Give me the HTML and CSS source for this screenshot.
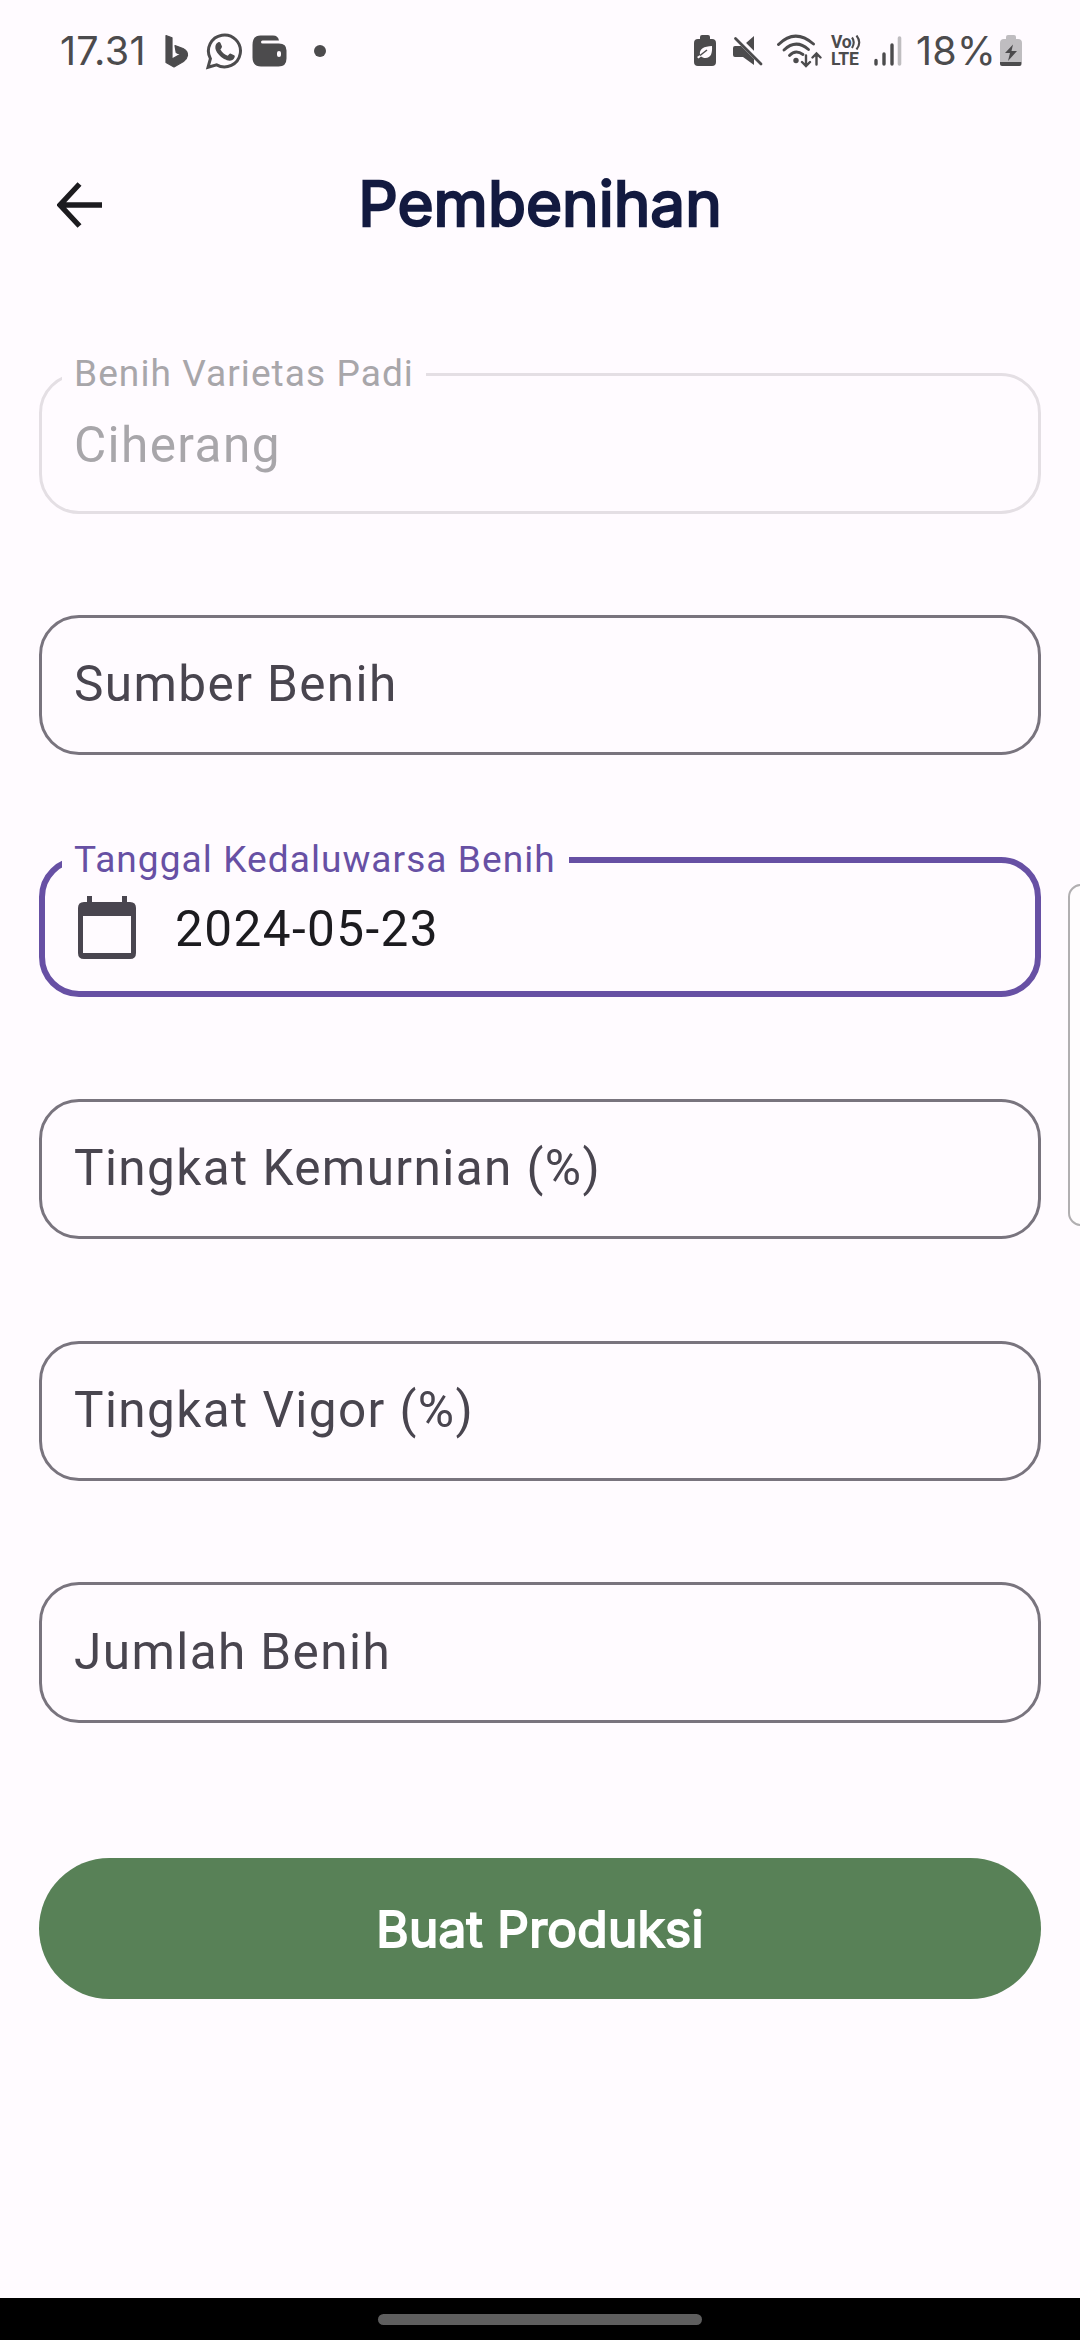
FILE: index.html
```html
<!DOCTYPE html>
<html lang="id">
<head>
<meta charset="utf-8">
<title>Pembenihan</title>
<link rel="stylesheet" href="styles.css">
</head>
<body>
<div class="status">
  <div class="status-group">
    <span class="clock">17.31</span>
    <svg class="ic-bing" width="24" height="34" viewBox="0 0 24 34"><path d="M1 1.5 7 3.8V25l8-4.6-3.8-1.9L10 11.600 18 14.500Q23 17 22.500 21.500 22 25 18.500 27.500L9 33 1 28.5Z" fill="#4c4b4d" stroke="#4c4b4d" stroke-width="1.2" stroke-linejoin="round"/></svg>
    <svg class="ic-wa" width="38" height="38" viewBox="0 0 38 38"><path d="M3 35.3 5.4 26.6A16 16 0 1 1 11.600 32.9Z" fill="none" stroke="#4c4b4d" stroke-width="3"/><path d="M13.200 10.200c.8-.5 1.800-.4 2.200.5l1.500 3.500c.3 1-.2 1.600-1.500 3.200 2 3.500 4.300 5.200 7.300 6.300 1.300-1.400 1.800-2.500 2.700-2.300l3.700 1.800c1 .5.8 1 .4 2.300-.8 2.200-3 3.200-5 3.200-2.800 0-8-2.500-10.800-6.100-2.500-3.200-3.800-5.600-3.300-8.400.3-1.900 1.300-3.100 2.800-4Z" fill="#4c4b4d"/></svg>
    <svg class="ic-wallet" width="36" height="32" viewBox="0 0 36 32"><path d="M8.500.5H21q5 0 6 5H10.500a1.300 1.300 0 0 0 0 3H27q7.500 0 7.500 7v8q0 8-8 8H9q-8.500 0-8.500-9V10q0-9.500 8-9.500Z" fill="#4c4b4d"/><rect x="25" y="16" width="4" height="6" rx="2" fill="#fffbff"/></svg>
    <i class="dot"></i>
  </div>
  <div class="status-group">
    <svg width="22" height="32" viewBox="0 0 22 32"><path d="M6 4V2q0-2 2-2h6q2 0 2 2v2h2q4 0 4 4v19q0 4-4 4H4q-4 0-4-4V8q0-4 4-4Z" fill="#4c4b4d"/><path d="M18 11c.5 7-1 12-6.500 12-2 0-3.300-.7-4.500-1.500L4.500 23.500 3 22l3-2C5 13.500 10 11.500 18 11Z" fill="#fffbff"/><path d="M6 20.500 13 15" stroke="#4c4b4d" stroke-width="1.500"/></svg>
    <svg class="ic-mute" width="30" height="30" viewBox="0 0 30 30"><path d="M13 7 21 0V15ZM0 12q0-2 2-2h6l13 13v6L10 21H2q-2 0-2-2Z" fill="#4c4b4d"/><path d="M4.500 .5 30 26" stroke="#fffbff" stroke-width="2.500"/><path d="M2.500 2.500 28 28" stroke="#4c4b4d" stroke-width="2.800" stroke-linecap="round"/></svg>
    <svg class="ic-wifi" width="45" height="34" viewBox="0 0 45 34"><g fill="none" stroke="#4c4b4d" stroke-width="2.900" stroke-linecap="round"><path d="M1.500 10.500Q18-6 36.500 10"/><path d="M7 16Q19 4.500 31.500 15.500"/><path d="M12.500 21.500Q18.500 15 26 20.500"/><path d="M29 21.500V31M25 28l4 4 4-4M39.500 30.500V20M35.500 23.500l4-4 4 4" stroke-width="2.400"/></g><circle cx="19" cy="26.500" r="2.700" fill="#4c4b4d"/></svg>
    <span class="volte"><span class="vo">Vo<svg width="10" height="15" viewBox="0 0 10 15"><path d="M1 2.500Q4.500 7 1 13M5.500.500Q11 7.500 5.500 14.500" fill="none" stroke="#4c4b4d" stroke-width="2.100"/></svg></span><span class="lte">LTE</span></span>
    <svg class="ic-signal" width="28" height="30" viewBox="0 0 28 30"><path d="M2 24.500V28M10 18V28M18 9V28" stroke="#4c4b4d" stroke-width="3.400" stroke-linecap="round"/><path d="M25.500 2V28" stroke="#bfbdc0" stroke-width="3.600" stroke-linecap="round"/></svg>
    <span class="percent">18%</span>
    <svg class="ic-charge" width="22" height="32" viewBox="0 0 22 32"><path d="M6 4V2q0-2 2-2h6q2 0 2 2v2h2q4 0 4 4v19H0V8q0-4 4-4Z" fill="#bfbdc0"/><path d="M0 27h21.500v2q0 2-2 2H2q-2 0-2-2Z" fill="#4c4b4d"/><path d="M13 9.500 5 18h5L8 26l9-10h-5.500Z" fill="#4c4b4d"/></svg>
  </div>
</div>

<header class="bar">
  <svg class="back" width="46" height="46" viewBox="0 0 46 46"><path d="M45 23H4M22.500 2 3 23l19.500 21" fill="none" stroke="#1c1b1f" stroke-width="5.400"/></svg>
  <h1 class="title">Pembenihan</h1>
</header>

<main class="form">
  <div class="field disabled"><span class="label">Benih Varietas Padi</span><span class="value">Ciherang</span></div>
  <div class="field"><span class="hint">Sumber Benih</span></div>
  <div class="field focused"><span class="label">Tanggal Kedaluwarsa Benih</span>
    <svg class="calendar" width="58" height="64" viewBox="0 0 58 64"><path fill-rule="evenodd" d="M9 0h5v6h30V0h5v6h3q6 0 6 6v45q0 6-6 6H6q-6 0-6-6V12q0-6 6-6h3ZM5 20v37h48V20Z" fill="#49454f"/></svg>
    <span class="value">2024-05-23</span></div>
  <div class="field"><span class="hint">Tingkat Kemurnian (%)</span></div>
  <div class="field"><span class="hint">Tingkat Vigor (%)</span></div>
  <div class="field"><span class="hint">Jumlah Benih</span></div>
  <button class="submit">Buat Produksi</button>
</main>

<div class="edge-panel"></div>
<footer class="nav"><div class="pill"></div></footer>
</body>
</html>
```
FILE: styles.css
```css
* { box-sizing: border-box; }
body {
  margin: 0;
  width: 1080px;
  height: 2340px;
  display: flex;
  flex-direction: column;
  position: relative;
  overflow: hidden;
  background: #fffbff;
  font-family: Roboto, sans-serif;
}
svg { display: block; flex: none; }

.status {
  height: 102px;
  padding: 0 58px 0 60px;
  display: flex;
  justify-content: space-between;
  align-items: center;
  color: #4c4b4d;
}
.status-group { display: flex; align-items: center; }
.clock, .percent { font: 380 39.500px/40px Inter, sans-serif; }
.clock { width: 105px; letter-spacing: 0.300px; }
.ic-wa { margin-left: 16px; }
.ic-wallet { margin-left: 9px; }
.dot { width: 12px; height: 12px; margin-left: 26px; border-radius: 50%; background: #4c4b4d; }
.ic-mute { margin-left: 17px; }
.ic-wifi { margin-left: 14px; }
.volte {
  width: 31px;
  margin-left: 9px;
  display: flex;
  flex-direction: column;
  font: 700 17.500px/17px Roboto, sans-serif;
}
.vo { display: flex; align-items: center; letter-spacing: -0.300px; }
.lte { letter-spacing: -0.200px; }
.ic-signal { margin-left: 12px; }
.percent { width: 80px; margin-left: 14px; letter-spacing: 0.300px; }
.ic-charge { margin-left: 4px; }

.bar {
  height: 205px;
  display: grid;
  grid-template-columns: 158px 1fr 158px;
  align-items: center;
}
.back { margin-left: 57px; }
.title {
  margin: 0 0 1px;
  text-align: center;
  font: 400 62px/80px Inter, sans-serif;
  -webkit-text-stroke: 2.400px #131a40;
  color: #131a40;
}

.form {
  flex: 1;
  padding: 66px 39px 0;
  display: flex;
  flex-direction: column;
  gap: 101.300px;
}
.field {
  position: relative;
  height: 140.600px;
  flex: none;
  display: flex;
  align-items: center;
  padding: 0 0 2px 32px;
  border: 3px solid #79747e;
  border-radius: 40px;
  font-size: 49.500px;
  line-height: 60px;
  letter-spacing: 1.400px;
  color: #49454f;
}
.label {
  position: absolute;
  left: 20px;
  top: -24px;
  padding: 0 12px;
  background: #fffbff;
  font-size: 37.100px;
  line-height: 44px;
  letter-spacing: 1.050px;
}
.disabled { border-color: #e4dfe4; color: #a8a6aa; padding: 4px 0 0 32px; }
.disabled .label { color: #a8a6aa; }
.focused { border: 6px solid #6750a4; padding: 1px 0 0 33px; }
.focused .value { margin: 2px 0 0 39px; color: #1c1b1f; }
.focused .label { left: 17px; top: -25px; color: #6750a4; padding-right: 13px; }
.submit {
  height: 140.600px;
  margin-top: 34px;
  border: 0;
  border-radius: 71px;
  background: #588157;
  color: #fff;
  font: 400 49.500px/60px Inter, sans-serif;
  letter-spacing: 0.300px;
  -webkit-text-stroke: 2px #fff;
}

.edge-panel {
  position: absolute;
  left: 1068px;
  top: 884px;
  width: 30px;
  height: 342px;
  border: 2px solid #b1afb1;
  border-radius: 13px;
  background: #fffdfe;
}
.nav { height: 42px; flex: none; background: #000; padding-top: 16px; }
.pill { width: 324px; height: 11px; margin: 0 auto; border-radius: 6px; background: #5e5e5e; }
```
